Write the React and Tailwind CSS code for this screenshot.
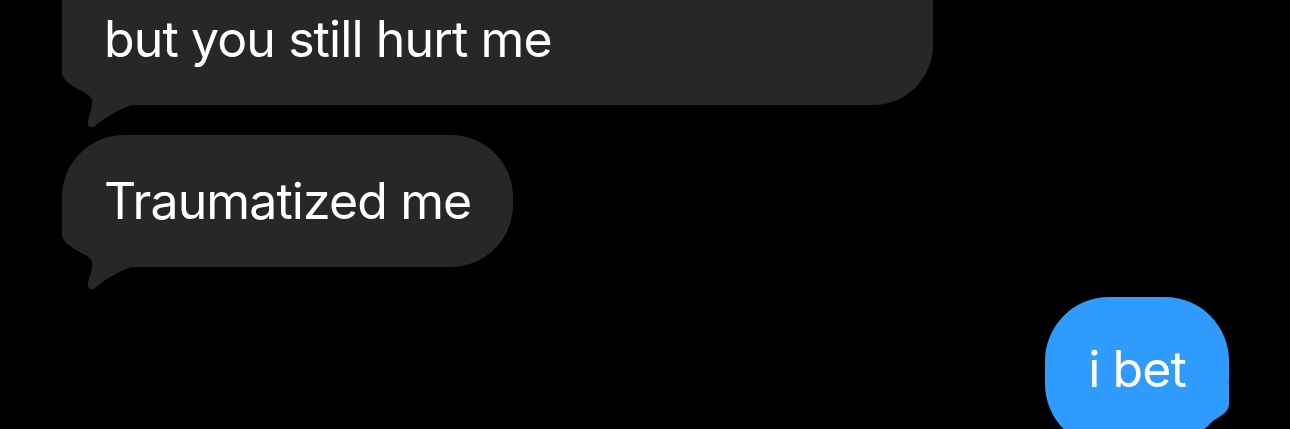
import React from "react";

const GRAY = "#27272a";
const BLUE = "#2f9bfc";

// tail outlines; y=64 is the bubble's bottom edge
const GRAY_TAIL =
  "M0,0 L0,32 C2,46 28,50 30,59 C31,66 27,74 26,80 C25,86 29,88 33,85 C42,78 52,70 70,64 L70,0 Z";
const BLUE_TAIL =
  "M0,0 L0,20 C0,34 26,36 27,50 L28,76 C28,81 31,82 34,80 C44,75 57,70 72,64 L72,0 Z";

// tail hooks off the bottom corner of a bubble; mirrored for outgoing
function Tail({ color, d, flip }) {
  return (
    <svg
      viewBox="0 0 80 90"
      className={
        "absolute w-[80px] h-[90px] -bottom-[26px] " +
        (flip ? "right-0 -scale-x-100" : "left-0")
      }
    >
      <path d={d} fill={color} />
    </svg>
  );
}

function Incoming({ children, className = "" }) {
  return (
    <div
      className={
        "relative flex items-end bg-[#27272a] px-[42px] text-white " +
        className
      }
    >
      <Tail color={GRAY} d={GRAY_TAIL} />
      <span className="relative leading-[60px]">{children}</span>
    </div>
  );
}

export default function App() {
  return (
    <div
      className="w-[1290px] h-[429px] overflow-hidden bg-black flex flex-col pl-[62px] pr-[61px] text-[50px] tracking-[-0.9px]"
      style={{ fontFamily: "Inter, 'Noto Sans', sans-serif" }}
    >
      <Incoming className="w-[871px] h-[240px] -mt-[135px] pb-[36px] shrink-0 rounded-[60px]">
        but you still hurt me
      </Incoming>
      <Incoming className="self-start mt-[30px] py-[36px] shrink-0 rounded-[62px]">
        Traumatized me
      </Incoming>
      <div className="relative self-end mt-[30px] shrink-0 rounded-[64px] rounded-br-[80px_68px] bg-[#2f9bfc] pl-[43px] pr-[43px] pt-[35px] pb-[41px] text-white">
        <Tail color={BLUE} d={BLUE_TAIL} flip />
        <span className="relative leading-[60px]">i bet</span>
      </div>
    </div>
  );
}
